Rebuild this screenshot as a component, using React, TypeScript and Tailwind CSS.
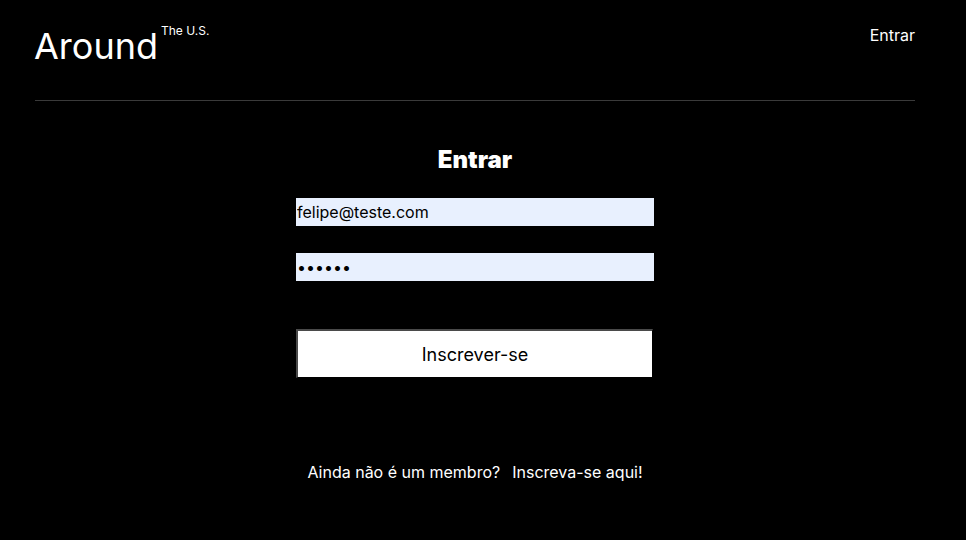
import { FC } from "react";

const App: FC = () => {
  return (
    <div className="min-h-[540px] bg-black text-white font-['Inter',sans-serif]">
      <div className="w-[950px]">
        <div className="px-[35px]">
          <header className="flex justify-between items-start h-[101px] border-b border-[#3a3a3a]">
            <div className="flex items-start pt-[24px]">
              <span className="text-[36px] leading-[44px] ml-[-1px]">Around</span>
              <span className="text-[12px] leading-[14px] ml-[3px] mt-[0px]">
                The U.S.
              </span>
            </div>
            <button className="text-[16px] leading-[20px] mt-[25px]">Entrar</button>
          </header>
        </div>
        <main className="flex flex-col items-center">
          <h1 className="text-[24px] leading-[28px] font-black mt-[45px]">
            Entrar
          </h1>
          <form className="flex flex-col w-[358px] mt-[24px]">
            <input
              className="h-[28px] bg-[#e8f0fe] text-black text-[16px] outline-none px-[1px]"
              defaultValue="felipe@teste.com"
            />
            <input
              type="password"
              className="h-[28px] bg-[#e8f0fe] text-black text-[16px] outline-none px-[1px] mt-[27px]"
              defaultValue="123456"
            />
            <button
              type="button"
              className="h-[49px] w-[357px] mt-[48px] bg-white text-black text-[18px] border-t-2 border-l-2 border-r border-b border-t-[#4a4a4a] border-l-[#4a4a4a] border-r-black border-b-black"
            >
              Inscrever-se
            </button>
          </form>
          <p className="mt-[84px] text-[16px] leading-[20px]">
            Ainda não é um membro?
            <a className="ml-[12px]" href="#">
              Inscreva-se aqui!
            </a>
          </p>
        </main>
      </div>
    </div>
  );
};

export default App;
